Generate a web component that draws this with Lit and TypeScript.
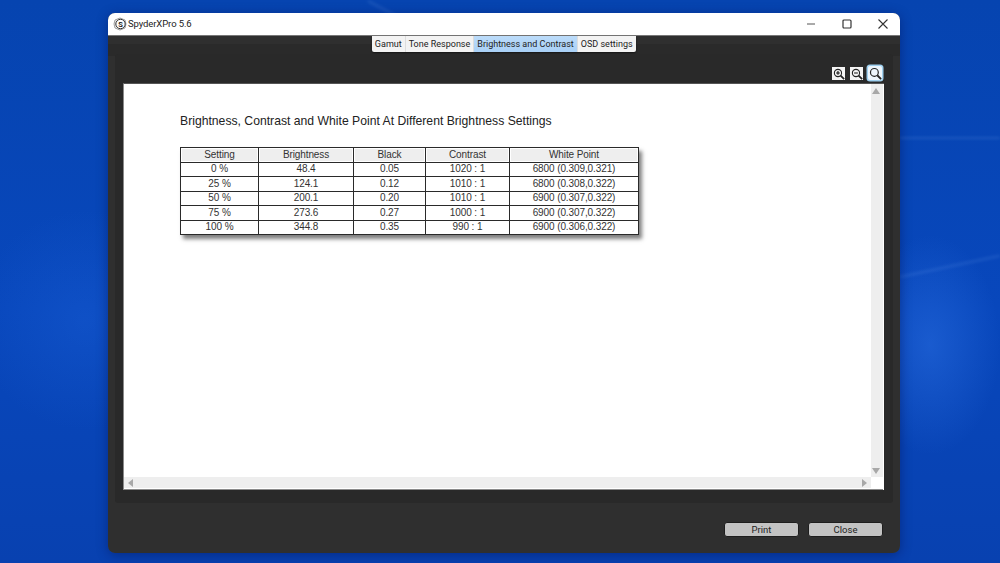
import { LitElement, html, css, svg } from 'lit';
import { customElement } from 'lit/decorators.js';

const rows = [
  ['0 %', '48.4', '0.05', '1020 : 1', '6800 (0.309,0.321)'],
  ['25 %', '124.1', '0.12', '1010 : 1', '6800 (0.308,0.322)'],
  ['50 %', '200.1', '0.20', '1010 : 1', '6900 (0.307,0.322)'],
  ['75 %', '273.6', '0.27', '1000 : 1', '6900 (0.307,0.322)'],
  ['100 %', '344.8', '0.35', '990 : 1', '6900 (0.306,0.322)'],
];
const headers = ['Setting', 'Brightness', 'Black', 'Contrast', 'White Point'];
const tabs = ['Gamut', 'Tone Response', 'Brightness and Contrast', 'OSD settings'];

const zoomIcon = (mark: 'plus' | 'minus' | 'none') => html`
  <svg viewBox="0 0 14 14">
    <circle cx="5.8" cy="5.8" r="4.2" fill="none" stroke="#222" stroke-width="1.3"></circle>
    <path d="M8.9 8.9 L13 13" stroke="#222" stroke-width="2" fill="none"></path>
    ${mark !== 'none' ? svg`<path d="M3.6 5.8 H8" stroke="#111" stroke-width="1.3"></path>` : ''}
    ${mark === 'plus' ? svg`<path d="M5.8 3.6 V8" stroke="#111" stroke-width="1.3"></path>` : ''}
  </svg>
`;

@customElement('app-root')
export class AppRoot extends LitElement {
  static styles = css`
    :host {
      display: block;
      position: relative;
      width: 1000px;
      height: 563px;
      overflow: hidden;
      font-family: Roboto, 'Liberation Sans', sans-serif;
      background:
        radial-gradient(ellipse 70px 110px at 930px 345px, rgba(50, 120, 235, 0.42), rgba(50, 120, 235, 0) 100%),
        radial-gradient(ellipse 110px 110px at 85px 320px, rgba(30, 100, 220, 0.32), rgba(30, 100, 220, 0) 100%),
        linear-gradient(180deg, #0644b0 0%, #0847bc 55%, #0841b0 100%);
    }

    .streak {
      position: absolute;
      height: 2px;
      background: rgba(150, 200, 255, 0.16);
      filter: blur(1.5px);
      transform-origin: left center;
    }

    .window {
      position: absolute;
      left: 107.5px;
      top: 12.5px;
      width: 792.5px;
      height: 540.5px;
      border-radius: 7px;
      background: linear-gradient(180deg, #2f2f2f 0 31px, #2a2a2a 31px 43px, #2f2f2f 43px);
      display: flex;
      flex-direction: column;
      overflow: hidden;
      box-shadow: 0 2px 12px rgba(0, 15, 80, 0.45);
    }

    .titlebar {
      height: 23.5px;
      flex: none;
      background: #fff;
      display: flex;
      align-items: center;
      padding-left: 5.5px;
      font-size: 9.5px;
      letter-spacing: -0.1px;
      color: #222;
      border-bottom: 1px solid #777;
      box-sizing: border-box;
    }

    .logo {
      margin-right: 1px;
    }

    .controls {
      margin-left: auto;
      display: flex;
      align-items: center;
      padding-right: 12px;
      gap: 26px;
    }

    .controls svg {
      display: block;
      width: 10px;
      height: 10px;
    }

    .tabs {
      align-self: center;
      display: flex;
      height: 16px;
      flex: none;
      background: #f3f3f3;
      font-size: 9px;
      color: #222;
      box-shadow: 0 1px 2px rgba(0, 0, 0, 0.5);
      border-radius: 0 0 2px 2px;
    }

    .tab {
      display: flex;
      align-items: center;
      padding: 0 3px;
      border-right: 1px solid #ddd;
      white-space: nowrap;
    }

    .tab:last-child {
      border-right: 0;
    }

    .tab.on {
      background: linear-gradient(180deg, #bcdcfa, #a9d0f6);
    }

    .panel {
      margin: 2px 7px 0 7.5px;
      height: 449px;
      flex: none;
      background: #292929;
      border-radius: 3px;
      box-sizing: border-box;
      padding: 10px 9px 13px 8px;
      display: flex;
      flex-direction: column;
    }

    .zoombar {
      height: 19px;
      flex: none;
      box-sizing: border-box;
      display: flex;
      justify-content: flex-end;
      align-items: flex-end;
      gap: 5px;
      padding: 0 2px 3px 0;
    }

    .zoombtn {
      width: 13px;
      height: 13px;
      background: #f4f4f4;
      display: flex;
      align-items: center;
      justify-content: center;
    }

    .zoombtn svg {
      width: 12px;
      height: 12px;
    }

    .zoombtn.on {
      width: 14px;
      height: 14px;
      background: #eef6fd;
      box-shadow: 0 0 0 1.5px #9fd0ef;
      border-radius: 2px;
    }

    .zoombtn.on svg {
      width: 13px;
      height: 13px;
    }

    .page {
      flex: 1;
      background: #fff;
      display: grid;
      grid-template-columns: 1fr 12px;
      grid-template-rows: 1fr 11px;
      border-left: 1px solid #8a8a8a;
      border-top: 1px solid #555;
      padding: 0 1px 2px 0;
      position: relative;
      min-height: 0;
    }

    .page::after {
      content: '';
      position: absolute;
      left: 0;
      right: 1px;
      bottom: 0;
      height: 1px;
      background: #8a8a8a;
    }

    .content {
      padding: 30px 0 0 56px;
    }

    h1 {
      margin: 0 0 19px;
      font-family: 'Liberation Sans', Arial, sans-serif;
      font-weight: normal;
      font-size: 12.2px;
      line-height: 14px;
      color: #222;
    }

    table {
      border-collapse: collapse;
      table-layout: fixed;
      width: 458px;
      font-family: 'Liberation Sans', Arial, sans-serif;
      font-size: 10px;
      letter-spacing: -0.1px;
      color: #333;
      text-align: center;
      box-shadow: 3px 4px 4px rgba(0, 0, 0, 0.5);
    }

    th, td {
      border: 1px solid #2a2a2a;
      padding: 0;
      height: 13.5px;
      line-height: 12px;
      font-weight: normal;
    }

    th {
      background: #eeeeee;
      box-shadow: inset 0 0 0 1px #fff;
    }

    .vscroll {
      background: #eeeeee;
      display: flex;
      flex-direction: column;
      justify-content: space-between;
      align-items: center;
      padding: 4px 2px 3px 0;
      box-sizing: border-box;
    }

    .hscroll {
      background: #eeeeee;
      display: flex;
      justify-content: space-between;
      align-items: center;
      padding: 0 4px 0 4px;
    }

    .corner {
      background: #fff;
    }

    .arrow {
      width: 0;
      height: 0;
      display: block;
    }

    .up {
      border: 4px solid transparent;
      border-top: 0;
      border-bottom: 6px solid #a8a8a8;
    }

    .down {
      border: 4px solid transparent;
      border-bottom: 0;
      border-top: 6px solid #a8a8a8;
    }

    .left {
      border: 4px solid transparent;
      border-left: 0;
      border-right: 5px solid #a8a8a8;
    }

    .right {
      border: 4px solid transparent;
      border-right: 0;
      border-left: 5px solid #a8a8a8;
    }

    .footer {
      flex: 1;
      display: flex;
      justify-content: flex-end;
      align-items: center;
      gap: 9px;
      padding: 3px 17px 0 0;
    }

    button {
      width: 75px;
      height: 15px;
      padding: 0;
      border: 1px solid #1e1e1e;
      border-radius: 3px;
      background: #c3c3c3;
      color: #222;
      font-family: inherit;
      font-size: 9.5px;
      line-height: 12px;
    }
  `;

  render() {
    return html`
      <div class="streak" style="left:368px;top:0;width:40px;transform:rotate(28deg)"></div>
      <div class="streak" style="left:900px;top:137px;width:100px"></div>
      <div class="streak" style="left:900px;top:276px;width:102px;transform:rotate(-12deg)"></div>
      <div class="window">
        <div class="titlebar">
          <svg class="logo" viewBox="0 0 14 14" width="14" height="14">
            <path d="M7 1 L12 3 L13 7 L12 11 L7 13 L2 11 L1 7 L2 3 Z" fill="#eee" stroke="#888" stroke-width="0.8"></path>
            <circle cx="7.5" cy="7" r="4.7" fill="#fff" stroke="#333" stroke-width="1"></circle>
            <text x="7.5" y="9.6" font-size="7.5" font-weight="bold" text-anchor="middle" fill="#222">S</text>
          </svg>
          SpyderXPro 5.6
          <div class="controls">
            <svg viewBox="0 0 10 10"><path d="M1 5 H9" stroke="#555" stroke-width="1"></path></svg>
            <svg viewBox="0 0 10 10"><rect x="1" y="1" width="8" height="8" rx="1" fill="none" stroke="#333" stroke-width="1.2"></rect></svg>
            <svg viewBox="0 0 10 10"><path d="M0.5 0.5 L9.5 9.5 M9.5 0.5 L0.5 9.5" stroke="#333" stroke-width="1.1"></path></svg>
          </div>
        </div>
        <div class="tabs">
          ${tabs.map((t, i) => html`<div class="tab ${i === 2 ? 'on' : ''}">${t}</div>`)}
        </div>
        <div class="panel">
          <div class="zoombar">
            <div class="zoombtn">${zoomIcon('plus')}</div>
            <div class="zoombtn">${zoomIcon('minus')}</div>
            <div class="zoombtn on">${zoomIcon('none')}</div>
          </div>
          <div class="page">
            <div class="content">
              <h1>Brightness, Contrast and White Point At Different Brightness Settings</h1>
              <table>
                <colgroup>
                  <col style="width:78px" />
                  <col style="width:95px" />
                  <col style="width:72px" />
                  <col style="width:84px" />
                  <col style="width:129px" />
                </colgroup>
                <tr>${headers.map(h => html`<th>${h}</th>`)}</tr>
                ${rows.map(r => html`<tr>${r.map(c => html`<td>${c}</td>`)}</tr>`)}
              </table>
            </div>
            <div class="vscroll"><i class="arrow up"></i><i class="arrow down"></i></div>
            <div class="hscroll"><i class="arrow left"></i><i class="arrow right"></i></div>
            <div class="corner"></div>
          </div>
        </div>
        <div class="footer">
          <button>Print</button>
          <button>Close</button>
        </div>
      </div>
    `;
  }
}

declare global {
  interface HTMLElementTagNameMap {
    'app-root': AppRoot;
  }
}
